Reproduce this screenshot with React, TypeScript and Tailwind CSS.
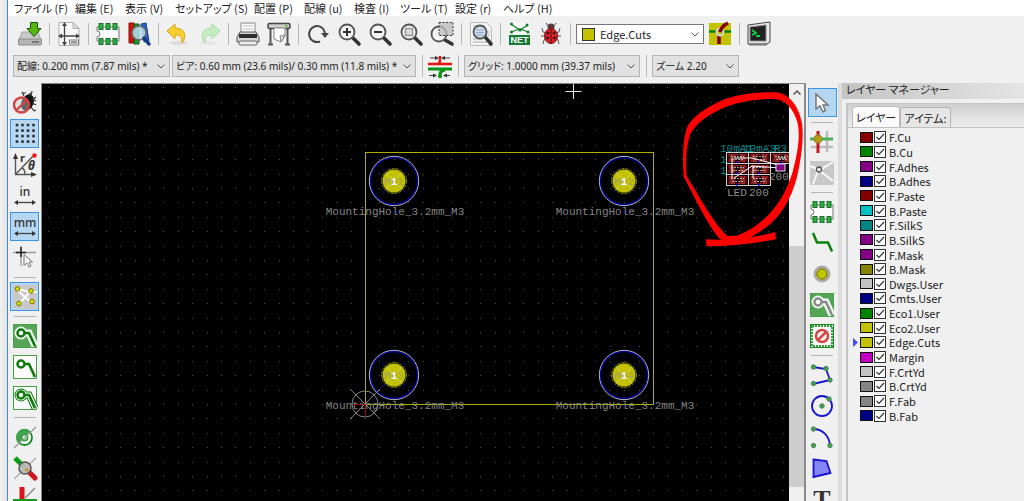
import clsx from "clsx";
import type { ReactNode } from "react";

const MENUS = [
  { label: "ファイル (F)", width: "w-[61px]" },
  { label: "編集 (E)", width: "w-[50px]" },
  { label: "表示 (V)", width: "w-[50px]" },
  { label: "セットアップ (S)", width: "w-[79px]" },
  { label: "配置 (P)", width: "w-[50px]" },
  { label: "配線 (u)", width: "w-[50px]" },
  { label: "検査 (I)", width: "w-[46px]" },
  { label: "ツール (T)", width: "w-[55px]" },
  { label: "設定 (r)", width: "w-[48px]" },
  { label: "ヘルプ (H)", width: "w-[60px]" },
];

const LAYERS = [
  { name: "F.Cu", color: "bg-[#840000]" },
  { name: "B.Cu", color: "bg-[#008400]" },
  { name: "F.Adhes", color: "bg-[#840084]" },
  { name: "B.Adhes", color: "bg-[#000084]" },
  { name: "F.Paste", color: "bg-[#840000]" },
  { name: "B.Paste", color: "bg-[#00c2c2]" },
  { name: "F.SilkS", color: "bg-[#008484]" },
  { name: "B.SilkS", color: "bg-[#840084]" },
  { name: "F.Mask", color: "bg-[#840084]" },
  { name: "B.Mask", color: "bg-[#848400]" },
  { name: "Dwgs.User", color: "bg-[#c2c2c2]" },
  { name: "Cmts.User", color: "bg-[#000084]" },
  { name: "Eco1.User", color: "bg-[#008400]" },
  { name: "Eco2.User", color: "bg-[#c2c200]" },
  { name: "Edge.Cuts", color: "bg-[#c2c200]" },
  { name: "Margin", color: "bg-[#c200c2]" },
  { name: "F.CrtYd", color: "bg-[#c2c2c2]" },
  { name: "B.CrtYd", color: "bg-[#848484]" },
  { name: "F.Fab", color: "bg-[#848484]" },
  { name: "B.Fab", color: "bg-[#000084]" },
];

const ACTIVE_LAYER = "Edge.Cuts";

function Icon(props: { children: ReactNode }) {
  return (
    <svg viewBox="0 0 24 24" className="size-6 shrink-0 overflow-visible" fill="none" aria-hidden>
      {props.children}
    </svg>
  );
}

/* ---- top toolbar icons ---- */

function SaveIcon() {
  return (
    <Icon>
      <path d="M4 10h16l3 8H1z" fill="#c9c9c9" stroke="#a2a2a2" />
      <rect x="0.5" y="17" width="23" height="6" rx="1" fill="#b5b5b5" stroke="#8a8a8a" />
      <path d="M14 20h7" stroke="#666" strokeWidth="1.5" />
      <path d="M12.500 0.500h7v6h3.500l-7 8-7-8h3.500z" fill="#55b80a" stroke="#20520a" />
    </Icon>
  );
}

function PageIcon() {
  return (
    <Icon>
      <path d="M2 .5h14l6 6v17H2z" fill="#fafafa" stroke="#b0b0b0" />
      <path d="M16 .5v6h6z" fill="#ddd" stroke="#b0b0b0" />
      <path d="M7.500 2v20M2 14h19" stroke="#444" strokeWidth="1.300" />
      <path d="M7.500 0l2.500 4H5zM7.500 24l2.500-4H5zM1 14l4-2.500v5zM23 14l-4-2.500v5z" fill="#444" />
      <rect x="12.500" y="18" width="9" height="4" fill="#fff" stroke="#777" />
      <path d="M14 20h6" stroke="#333" />
    </Icon>
  );
}

function ChipIcon() {
  const xs = [3, 10, 17];
  return (
    <Icon>
      <path d="M1 5h22v14H1v-4a3 3 0 0 0 0-6z" fill="#fafafa" stroke="#777" />
      {xs.map((x) => (
        <g key={x} fill="#1db53a" stroke="#256b31">
          <rect x={x} y="1.500" width="4" height="6" />
          <rect x={x} y="16.500" width="4" height="6" />
        </g>
      ))}
    </Icon>
  );
}

function Lens(props: { cx?: number; cy?: number; r?: number; fill?: string }) {
  const { cx = 10, cy = 10, r = 7.5, fill = "#f4f4f4" } = props;
  const e = r * 0.8;
  return (
    <>
      <path d={`M${cx + e} ${cy + e}L22 22`} stroke="#333" strokeWidth="3.600" strokeLinecap="round" />
      <circle cx={cx} cy={cy} r={r} fill={fill} stroke="#555" strokeWidth="1.800" />
    </>
  );
}

function LibraryIcon() {
  return (
    <Icon>
      <path d="M2 1h5v20H2z" fill="#d8120a" stroke="#8d0b06" />
      <path d="M7 2h5v20H7z" fill="#179c28" stroke="#0a5c16" />
      <path d="M14 2l5-1 3 18-5 1z" fill="#2b62c8" stroke="#163c86" />
      <circle cx="12" cy="11" r="7" fill="#b9dceb" fillOpacity=".85" stroke="#666" strokeWidth="1.500" />
      <path d="M17 16l5 6" stroke="#173a7c" strokeWidth="3.500" strokeLinecap="round" />
    </Icon>
  );
}

function UndoIcon() {
  return (
    <Icon>
      <ellipse cx="13" cy="21" rx="9" ry="2" fill="#ddd" />
      <path
        d="M1 9l8-7v4c9 0 13 7 7 15 0-6-1-8-7-8v4z"
        fill="#f5cf2f"
        stroke="#d9a514"
        strokeLinejoin="round"
      />
    </Icon>
  );
}

function RedoIcon() {
  return (
    <Icon>
      <ellipse cx="11" cy="21" rx="9" ry="2" fill="#e6e6e6" />
      <path
        d="M23 9l-8-7v4C6 6 2 13 8 21c0-6 1-8 7-8v4z"
        fill="#c5ecc0"
        stroke="#aadca6"
        strokeLinejoin="round"
      />
    </Icon>
  );
}

function PrintIcon() {
  return (
    <Icon>
      <path d="M5 1h14v10H5z" fill="#fdfdfd" stroke="#888" />
      <path d="M7 4h10M7 7h10" stroke="#bbb" />
      <path d="M4 10h16l3 5v5H1v-5z" fill="#d6d6d6" stroke="#555" />
      <rect x="3" y="12" width="18" height="4" fill="#2d2d2d" />
      <rect x="3" y="19" width="18" height="4" rx="1" fill="#eee" stroke="#666" />
    </Icon>
  );
}

function PlotIcon() {
  return (
    <Icon>
      <rect x="1" y="1.500" width="22" height="5" rx="1.500" fill="#cfcfcf" stroke="#444" strokeWidth="1.500" />
      <path d="M18 4h3" stroke="#63b82c" strokeWidth="1.500" />
      <path d="M3.500 7v15M20.500 7v15M1 22.500h5M18 22.500h5" stroke="#555" strokeWidth="2" />
      <path d="M7 6h11v8l-4 6-7-3z" fill="#fff" stroke="#888" />
      <path d="M18 13l-5 1 1 6z" fill="#ddd" stroke="#888" />
    </Icon>
  );
}

function RefreshIcon() {
  return (
    <Icon>
      <path d="M14 19.500A8 8 0 1 1 19 11" stroke="#444" strokeWidth="2" />
      <path d="M15 11h8l-4 5z" fill="#444" />
    </Icon>
  );
}

function ZoomInIcon() {
  return (
    <Icon>
      <Lens />
      <path d="M6 10h8M10 6v8" stroke="#333" strokeWidth="2" />
    </Icon>
  );
}

function ZoomOutIcon() {
  return (
    <Icon>
      <Lens />
      <path d="M6 10h8" stroke="#333" strokeWidth="2" />
    </Icon>
  );
}

function ZoomFitIcon() {
  return (
    <Icon>
      <Lens />
      <rect x="6.500" y="6.500" width="7" height="7" fill="#ddd" stroke="#999" strokeWidth="1.500" />
    </Icon>
  );
}

function ZoomAreaIcon() {
  return (
    <Icon>
      <Lens cy={12} cx={9} />
      <rect x="9" y=".5" width="14" height="13" fill="#bbb" fillOpacity=".75" stroke="#333" strokeDasharray="2 1.500" />
    </Icon>
  );
}

function FindIcon() {
  return (
    <Icon>
      <path d="M1.500.5h16l5 5v18h-21z" fill="#f5f5f5" stroke="#bbb" />
      <path d="M4 4h12M4 7h4M4 17h10M4 20h14M18 10h3M18 13h3" stroke="#aaa" />
      <Lens cx={11} cy={10} r={6.5} fill="#cfdcec" />
      <path d="M7 8h8M7 10.500h8M7 13h7" stroke="#8ea6c9" />
    </Icon>
  );
}

function NetIcon() {
  return (
    <Icon>
      <rect x="2" y="0" width="20" height="12" fill="#f6f6f6" />
      <path d="M3 2l9 6 8-5M3 10l9-3 8 3" stroke="#1c8a2b" strokeWidth="1.200" />
      <g fill="#12792b">
        <circle cx="3.500" cy="2" r="1.500" />
        <circle cx="19" cy="3" r="1.500" />
        <circle cx="12" cy="8" r="1.600" />
        <circle cx="3.500" cy="10" r="1.500" />
        <circle cx="20" cy="10" r="1.500" />
      </g>
      <rect x="1" y="13" width="21" height="10" fill="#147a35" />
      <text x="11.500" y="21" textAnchor="middle" fill="#fff" className="font-['Liberation_Sans'] text-[9px] font-bold">
        NET
      </text>
    </Icon>
  );
}

function LadybugIcon() {
  return (
    <Icon>
      <path
        d="M7 1l3 4M17 1l-3 4M3 6l1 4 4 1M21 6l-1 4-4 1M2 14h5M22 14h-5M4 22l1-4 3-2M20 22l-1-4-3-2"
        stroke="#555"
      />
      <circle cx="12" cy="5" r="3.500" fill="#5c3a3a" />
      <ellipse cx="12" cy="14" rx="6.500" ry="7.500" fill="#d8222b" stroke="#7d1117" />
      <path d="M12 7v15" stroke="#5c0b10" />
      <g fill="#3a090c">
        <circle cx="9" cy="11" r="1.300" />
        <circle cx="15" cy="11" r="1.300" />
        <circle cx="8.500" cy="16" r="1.300" />
        <circle cx="15.500" cy="16" r="1.300" />
      </g>
    </Icon>
  );
}

function LayerPairIcon() {
  return (
    <Icon>
      <rect x="1" y="1" width="22" height="22" fill="#c2c200" />
      <path d="M1 9.500h22" stroke="#008400" strokeWidth="2.500" />
      <path d="M11 22V11" stroke="#840000" strokeWidth="3.600" />
      <circle cx="12" cy="10" r="3.500" fill="#c2c200" stroke="#d8d8d8" strokeWidth="2" />
      <path d="M12 10c1-4 4-7 8-9" stroke="#840000" strokeWidth="3.600" />
    </Icon>
  );
}

function ConsoleIcon() {
  return (
    <Icon>
      <path d="M1 3l22-3v20l-3 2H1z" fill="#e8e8e8" stroke="#444" />
      <path d="M2 22.500h18" stroke="#777" strokeWidth="2" />
      <path d="M3 5l16-2v16H3z" fill="#222" stroke="#888" />
      <path d="M5 8l4 3-4 2M9 14h4" stroke="#13d447" strokeWidth="1.800" />
    </Icon>
  );
}

function AutoTrackIcon() {
  return (
    <Icon>
      <path d="M0 9h24" stroke="#e11" strokeWidth="2.500" />
      <path d="M9 9c3 0 3-2 3-8" stroke="#e11" strokeWidth="2.500" />
      <path d="M0 14h24" stroke="#0a9413" strokeWidth="3" />
      <path d="M12 23v-3c0-3 2-5 5-5" stroke="#0a9413" strokeWidth="3.500" />
      <path d="M2 3h7M22 3h-7M1 20.500h7M22 20.500h-6" stroke="#444" />
      <path d="M11 3L7 1v4zM13 3l4-2v4zM9 20.500l-4-2v4zM15 20.500l4-2v4z" fill="#333" />
    </Icon>
  );
}

/* ---- left toolbar icons ---- */

function DrcOffIcon() {
  return (
    <Icon>
      <ellipse cx="14.500" cy="11.500" rx="6" ry="8.500" transform="rotate(25 14.500 11.500)" fill="#111" />
      <path
        d="M9 1l2 4M19 0l-1 5M10 2h3M19 2l-3 1M23 6l-4 3M19 12l4 2M18 16l3 4M21 20l2-1M20 8l3 2"
        stroke="#333"
        strokeWidth="1.200"
      />
      <circle cx="8.500" cy="14" r="7.500" fill="#ccc" fillOpacity=".45" stroke="#cf4444" strokeWidth="2.400" />
      <path d="M3.500 19L14 9" stroke="#cf4444" strokeWidth="2.400" />
    </Icon>
  );
}

function GridIcon() {
  const steps = [4, 9.5, 15, 20.5];
  return (
    <Icon>
      {steps.map((y) => steps.map((x) => <circle key={`${x}-${y}`} cx={x} cy={y - 1} r="1.500" fill="#333" />))}
    </Icon>
  );
}

function PolarIcon() {
  return (
    <Icon>
      <path d="M2.500 3v18.500H20M3 21L20 3M9 15c2 1 3 3 3 6" stroke="#555" strokeWidth="1.400" />
      <path d="M2.500 0l2.500 6H0zM24 21.500L18 19v5z" fill="#333" />
      <circle cx="21.500" cy="2.500" r="2.200" fill="#f11" />
      <text x="7" y="9" fill="#333" className="font-['Noto_Sans'] text-[11px] font-bold">
        r
      </text>
      <text x="15" y="17" fill="#333" className="font-['Noto_Sans'] text-[12px] font-bold italic">
        θ
      </text>
    </Icon>
  );
}

function UnitIcon(props: { unit: string }) {
  return (
    <Icon>
      <text x="12" y="12" textAnchor="middle" fill="#333" className="font-['Noto_Sans'] text-[12px] font-medium">
        {props.unit}
      </text>
      <path d="M3 18.500h18" stroke="#444" strokeWidth="1.300" />
      <path d="M1 18.500l4-2.500v5zM23 18.500l-4-2.500v5z" fill="#333" />
    </Icon>
  );
}

function CursorShapeIcon() {
  return (
    <Icon>
      <path d="M8 0v20M0 6.500h23" stroke="#999" strokeWidth="1.300" />
      <path d="M8 1v10M3 6.500h10" stroke="#222" strokeWidth="1.500" />
      <path d="M11 8.500v11l3-2.500 2 4 2-1-2-4h3.500z" fill="#f6f6f6" stroke="#777" />
    </Icon>
  );
}

function RatsnestIcon() {
  return (
    <Icon>
      <rect width="24" height="24" fill="#c8c8c8" />
      <path d="M4 5l15 13M18 6L5 20M18 7h6M4 4l14 3" stroke="#fff" strokeWidth="2" />
      <g fill="#dede00" stroke="#777700">
        <circle cx="4.500" cy="4" r="2.300" />
        <circle cx="18" cy="6" r="2.300" />
        <circle cx="6" cy="18.500" r="2.300" />
        <circle cx="19" cy="16.500" r="2.300" />
      </g>
    </Icon>
  );
}

function ZoneIcon(props: { filled?: boolean; outlined?: boolean; color?: string }) {
  const { filled, outlined, color = "#0a7a0a" } = props;
  const track = "M11 9h5l6 13";
  return (
    <Icon>
      <rect x=".5" y=".5" width="23" height="23" fill={filled ? "#56a456" : "#fbfbfb"} stroke="#46a046" />
      {outlined && (
        <>
          <circle cx="8" cy="9" r="6.500" fill={filled ? "#f2f8f2" : color} />
          <path d={track} stroke={filled ? "#f2f8f2" : color} strokeWidth="7" />
          <circle cx="8" cy="9" r="5.500" fill="#f2f8f2" />
          <path d={track} stroke="#f2f8f2" strokeWidth="5" />
        </>
      )}
      <path d={track} stroke={color} strokeWidth="2.600" />
      <circle cx="8" cy="9" r="3.500" fill="#fff" stroke={color} strokeWidth="2.500" />
    </Icon>
  );
}

function ViaSketchIcon() {
  return (
    <Icon>
      <circle cx="11.500" cy="12.500" r="7.500" fill="#fff" stroke="#0c8c20" strokeWidth="1.800" />
      <path d="M5.500 18A8 8 0 0 1 17 6.500z" fill="#3ea44b" />
      <circle cx="11.500" cy="12.500" r="3" fill="#fff" stroke="#3ea44b" strokeWidth="2" />
      <path d="M1 23L23 2" stroke="#999" strokeWidth="1.200" />
    </Icon>
  );
}

function TrackSketchIcon() {
  return (
    <Icon>
      <path d="M2 2l9 9" stroke="#0c9c1c" strokeWidth="5" />
      <path d="M13 13l9 9" stroke="#d8141c" strokeWidth="5" strokeLinecap="round" />
      <path d="M1 23L23 2" stroke="#aaa" strokeWidth="1.300" />
      <circle cx="12" cy="12" r="6" fill="#bbb" fillOpacity=".9" stroke="#555" strokeWidth="1.500" />
      <path d="M11 14l4-2v3z" fill="#c2a200" />
    </Icon>
  );
}

function ContrastIcon() {
  return (
    <Icon>
      <path d="M9 0v24" stroke="#d8141c" strokeWidth="5" />
      <path d="M0 13h24" stroke="#159a1c" strokeWidth="2" />
      <path d="M12 11L22 1" stroke="#888" strokeWidth="1.500" />
    </Icon>
  );
}

/* ---- right toolbar icons ---- */

function ArrowIcon() {
  return (
    <Icon>
      <path d="M6 3v15l4-3 3 6 2.500-1.500L13 14h5z" fill="#fff" stroke="#777" strokeWidth="1.500" />
    </Icon>
  );
}

function HighlightNetIcon() {
  return (
    <Icon>
      <path d="M17 1v21M1 17h22" stroke="#bbb" strokeWidth="2.500" />
      <path d="M8 1v22" stroke="#c9151d" strokeWidth="3" />
      <path d="M0 9h23" stroke="#4cae55" strokeWidth="3" />
      <circle cx="8" cy="9" r="4" fill="#b79b1b" stroke="#94801c" />
    </Icon>
  );
}

function LocalRatsnestIcon() {
  return (
    <Icon>
      <rect width="24" height="24" rx="1" fill="#c8c8c8" />
      <path d="M8 8L0 5M10 9l13-8M8 10L3 23M10 10l13 10" stroke="#fafafa" strokeWidth="2" />
      <circle cx="9" cy="8.500" r="2.500" fill="#eee" stroke="#555" strokeWidth="1.300" />
    </Icon>
  );
}

function RouteIcon() {
  return (
    <Icon>
      <path d="M3 2l4 9.500h11l4 9" stroke="#07830c" strokeWidth="2.500" />
    </Icon>
  );
}

function ViaIcon() {
  return (
    <Icon>
      <circle cx="12" cy="12" r="7" fill="#c2c200" stroke="#a9a9a9" strokeWidth="3" />
      <circle cx="12" cy="12" r="5" stroke="#777700" />
    </Icon>
  );
}

function KeepoutIcon() {
  return (
    <Icon>
      <rect x="2" y="2" width="20" height="20" stroke="#3e9b45" strokeWidth="3" strokeDasharray="2 1" />
      <rect x=".5" y=".5" width="23" height="23" stroke="#188a22" />
      <rect x="3" y="3" width="18" height="18" fill="#fafafa" />
      <circle cx="12" cy="12" r="6" stroke="#d64545" strokeWidth="2.500" />
      <path d="M8 16l8-8" stroke="#d64545" strokeWidth="2.500" />
    </Icon>
  );
}

function Nodes(props: { points: [number, number][] }) {
  return props.points.map(([x, y]) => (
    <circle key={`${x}-${y}`} cx={x} cy={y} r="2.200" fill="#2fae3f" stroke="#5b7a5f" />
  ));
}

function LineIcon() {
  return (
    <Icon>
      <path d="M3 4l13 2 4 11-17 4" stroke="#1414cc" strokeWidth="1.800" />
      <Nodes points={[[3.5, 4], [16, 5.5], [20, 17], [3.5, 20.5]]} />
    </Icon>
  );
}

function CircleIcon() {
  return (
    <Icon>
      <circle cx="12" cy="12" r="10" stroke="#1414cc" strokeWidth="1.800" />
      <Nodes points={[[12, 12], [19, 5]]} />
    </Icon>
  );
}

function ArcIcon() {
  return (
    <Icon>
      <path d="M3 4c10 0 16 7 17 16" stroke="#1414cc" strokeWidth="1.800" />
      <Nodes points={[[3.5, 4], [3.5, 20.5], [20, 20.5]]} />
    </Icon>
  );
}

function PolygonIcon() {
  return (
    <Icon>
      <path d="M3.500 3.500l13 1.500 4 12-17 4z" fill="#8484f4" stroke="#1414cc" strokeWidth="1.800" />
    </Icon>
  );
}

function TextIcon() {
  return (
    <Icon>
      <text x="12" y="21" textAnchor="middle" fill="#333" className="font-['Liberation_Serif'] text-[26px] font-bold">
        T
      </text>
    </Icon>
  );
}

/* ---- toolbar pieces ---- */

function Tool(props: { label: string; selected?: boolean; children: ReactNode }) {
  return (
    <button
      type="button"
      aria-label={props.label}
      aria-pressed={props.selected}
      className={clsx(
        "flex size-[29px] shrink-0 items-center justify-center border",
        props.selected ? "border-[#3c95e4] bg-[#b5d7f3]" : "border-transparent",
      )}
    >
      {props.children}
    </button>
  );
}

function TopTool(props: { label: string; children: ReactNode }) {
  return (
    <button type="button" aria-label={props.label} className="flex h-7 w-[31px] shrink-0 items-center justify-center">
      {props.children}
    </button>
  );
}

function VLine() {
  return (
    <div className="flex h-[22px] w-2 shrink-0 justify-center">
      <div className="w-px bg-[#b8b8b8]" />
    </div>
  );
}

function HLine() {
  return (
    <div className="flex h-1.5 w-[22px] shrink-0 items-center">
      <div className="h-px w-full bg-[#b4b4b4]" />
    </div>
  );
}

function Chevron() {
  return (
    <svg
      viewBox="0 0 8 5"
      className="pointer-events-none col-start-1 row-start-1 mr-1 h-[5px] w-2 self-center justify-self-end"
      fill="none"
      aria-hidden
    >
      <path d="M.5.5L4 4 7.500.5" stroke="#555" />
    </svg>
  );
}

function Combo(props: { label: string; value: string; width: string }) {
  return (
    <div className={clsx("grid h-[22px] shrink-0 border border-[#b4b4b4] bg-[#e1e1e1]", props.width)}>
      <select
        aria-label={props.label}
        className="col-start-1 row-start-1 w-full appearance-none bg-transparent pr-3 pl-[3px] font-['Noto_Sans','Noto_Sans_CJK_JP',sans-serif] text-[10px] leading-5"
      >
        <option>{props.value}</option>
      </select>
      <Chevron />
    </div>
  );
}

/* ---- board canvas ---- */

const PITCH = 14.4;
const ORIGIN = { x: 323, y: 320 };
const HOLES = [
  { x: 352, y: 97, ref: "MH1" },
  { x: 582, y: 97, ref: "MH2" },
  { x: 352, y: 291, ref: "MH3" },
  { x: 582, y: 291, ref: "MH4" },
];
const PARTS = [
  { x: 686, y: 71 },
  { x: 708, y: 71 },
  { x: 730, y: 71 },
  { x: 686, y: 82 },
  { x: 708, y: 82 },
  { x: 686, y: 93 },
  { x: 708, y: 93 },
];

function gridPath() {
  let d = "";
  for (let row = -22; row < 40; row++) {
    for (let col = -22; col < 80; col++) {
      const x = Math.round(ORIGIN.x + col * PITCH);
      const y = Math.round(ORIGIN.y + row * PITCH);
      d += `M${x} ${y}h1v1h-1z`;
    }
  }
  return d;
}

function MountingHole(props: { x: number; y: number; name: string }) {
  return (
    <g transform={`translate(${props.x} ${props.y})`}>
      <circle r="23.500" fill="none" stroke="#000098" strokeWidth="1.500" />
      <circle r="24.700" fill="none" stroke="#b4b4b4" />
      <circle r="12.500" fill="none" stroke="#848400" strokeDasharray="3 1" />
      <circle r="11.500" fill="#c2c200" />
      <path d="M-8-8L8 8M8-8L-8 8" stroke="#d0d070" />
      <path d="M-12-12l3 3M12-12l-3 3M-12 12l3-3M12 12l-3-3M-2 31h6" stroke="#000098" />
      <text y="4" textAnchor="middle" fill="#a6a65a" className="text-[11px]">
        {props.name}
      </text>
      <text y="4" textAnchor="middle" fill="#fff" className="text-[10px] font-bold">
        1
      </text>
      <text x="1" y="34" textAnchor="middle" fill="#848484" className="text-[11px]">
        MountingHole_3.2mm_M3
      </text>
    </g>
  );
}

function Board() {
  return (
    <svg className="absolute inset-0 size-full font-['Liberation_Mono',monospace]">
      <path d={gridPath()} fill="#505050" />
      <rect x="323.500" y="68.500" width="288" height="252" fill="none" stroke="#b0b000" />
      {HOLES.map((hole) => (
        <MountingHole key={hole.ref} x={hole.x} y={hole.y} name={hole.ref} />
      ))}
      <g fill="none" stroke="#848484">
        <circle cx="323" cy="320" r="13" />
        <path d="M308 305l30 30M338 305l-30 30" />
        <path d="M311 320.500h12.500v12" stroke="#a00000" />
      </g>
      <path d="M523.500 7.500h16M531.500 0v15" stroke="#e8e8e8" />

      <g className="text-[11px]" fill="#008c8c">
        <text x="678" y="68">10mA1</text>
        <text x="701" y="68">10mA3</text>
        <text x="732" y="68">R3</text>
        <text x="678" y="79">1</text>
        <text x="678" y="90">1</text>
      </g>
      {PARTS.map((part) => (
        <g key={`${part.x}-${part.y}`} transform={`translate(${part.x} ${part.y})`}>
          <rect x="-1.500" y="-2.500" width="22" height="11" fill="#180000" stroke="#d0d0d0" />
          <rect x="1" y="-.5" width="17" height="7" fill="none" stroke="#b82020" strokeDasharray="4 1" />
          <rect x="2" y="0" width="5" height="6" fill="#8c2a2a" />
          <rect x="12" y="0" width="5" height="6" fill="#8c2a2a" />
          <path d="M3 1.500h13M4 4.500h12" stroke="#b0a8a8" strokeDasharray="2 1" />
          <circle cx="9" cy="7.500" r="1.200" fill="#0000c0" />
        </g>
      ))}
      <path d="M692 74h18l30 8M690 74v20M692 94l18-12 28 2M711 82v12M736 74h8" fill="none" stroke="#fff" />
      <rect x="734" y="80" width="9" height="7" fill="#840084" stroke="#ddd" />
      <g className="text-[11px]" fill="#8c8c8c">
        <text x="685" y="112">LED</text>
        <text x="707" y="112">200</text>
        <text x="727" y="96">200</text>
      </g>
    </svg>
  );
}

// Hand-drawn marker around the unplaced parts
function MarkerLoop() {
  return (
    <svg viewBox="0 0 420 540" className="pointer-events-none absolute -top-1 left-[628px] z-10 h-[180px] w-[140px]">
      <path
        fillRule="evenodd"
        fill="#f00"
        d="M150 478C108 428 80 362 41 290C37 235 38 185 50 145C62 115 105 82 165 57C215 42 265 35 320 37C362 42 388 85 396 130C402 175 394 235 380 295C364 352 340 395 308 425C278 453 240 475 205 492ZM172 468C126 424 96 362 50 288C47 235 48 202 61 162C80 127 120 100 175 78C225 62 270 55 318 58C350 62 372 90 383 130C391 170 383 220 368 275C348 340 318 385 283 416C255 442 225 458 200 467Z"
      />
      <path d="M108 478C170 482 250 475 316 456L318 478C260 490 180 499 109 499Z" fill="#f00" />
    </svg>
  );
}

function LayerRow(props: { name: string; color: string }) {
  return (
    <li className="flex items-center">
      <span className="flex w-[7px] shrink-0">
        {props.name === ACTIVE_LAYER && (
          <svg viewBox="0 0 5 9" className="h-[9px] w-[5px]" aria-hidden>
            <path d="M0 0l5 4.500L0 9z" fill="#4a4aff" />
          </svg>
        )}
      </span>
      <span className={clsx("h-[11px] w-[13px] border border-[#111]", props.color)} />
      <label className="flex items-center gap-[3px] pl-px">
        <span className="grid">
          <input
            type="checkbox"
            defaultChecked
            className="peer col-start-1 row-start-1 size-3 appearance-none border border-[#333] bg-white"
          />
          <svg
            viewBox="0 0 12 12"
            className="pointer-events-none invisible col-start-1 row-start-1 size-3 peer-checked:visible"
            fill="none"
            aria-hidden
          >
            <path d="M2.500 6L5 8.500l5-5.500" stroke="#333" strokeWidth="1.200" />
          </svg>
        </span>
        <span className="leading-[14px]">{props.name}</span>
      </label>
    </li>
  );
}

function LayerManager() {
  return (
    <aside className="flex min-w-0 flex-1 flex-col border-l-4 border-[#dcdcdc]">
      <h2 className="h-4 bg-linear-to-r from-[#c4c4c4] to-[#e4e4e4] pl-1 leading-3">
        レイヤー マネージャー
      </h2>
      <div className="mt-1 ml-1 flex-1 border-t border-l-2 border-[#c4c4c4]">
        <div role="tablist" className="flex h-6 items-end border-b border-[#c0c0c0] bg-linear-to-b from-[#d0d0d0] to-[#ececec] pl-1">
          <button
            type="button"
            role="tab"
            aria-selected="true"
            className="h-[21px] w-12 rounded-t-sm border border-b-0 border-[#bbb] bg-[#fafafa] leading-5"
          >
            レイヤー
          </button>
          <button
            type="button"
            role="tab"
            aria-selected="false"
            className="h-5 w-[51px] rounded-t-sm border border-b-0 border-[#b4b4b4] bg-[#e6e6e6] leading-[18px]"
          >
            アイテム:
          </button>
        </div>
        <ul className="mt-0.5 grid h-[293px] auto-rows-fr pl-[5px]">
          {LAYERS.map((layer) => (
            <LayerRow key={layer.name} name={layer.name} color={layer.color} />
          ))}
        </ul>
      </div>
    </aside>
  );
}

export default function App() {
  return (
    <div className="flex h-screen overflow-hidden bg-[#f0f0f0] font-['Noto_Sans_CJK_JP',sans-serif] text-[11px] text-[#222] [font-feature-settings:'palt']">
      <div className="w-2 shrink-0 border-r border-[#3f8fd0] bg-linear-to-r from-[#f2f2f2] to-[#e2e2e2]" />
      <div className="flex min-w-0 flex-1 flex-col">
        <nav className="flex h-4 shrink-0 bg-white pl-1.5">
          {MENUS.map((menu) => (
            <button
              key={menu.label}
              type="button"
              className={clsx("shrink-0 text-left leading-4 whitespace-nowrap", menu.width)}
            >
              {menu.label}
            </button>
          ))}
        </nav>

        <div className="flex h-9 shrink-0 items-center pl-1.5">
          <TopTool label="Save board"><SaveIcon /></TopTool>
          <VLine />
          <TopTool label="Page settings"><PageIcon /></TopTool>
          <VLine />
          <TopTool label="Footprint editor"><ChipIcon /></TopTool>
          <TopTool label="Footprint library"><LibraryIcon /></TopTool>
          <VLine />
          <TopTool label="Undo"><UndoIcon /></TopTool>
          <TopTool label="Redo"><RedoIcon /></TopTool>
          <VLine />
          <TopTool label="Print"><PrintIcon /></TopTool>
          <TopTool label="Plot"><PlotIcon /></TopTool>
          <VLine />
          <TopTool label="Redraw"><RefreshIcon /></TopTool>
          <TopTool label="Zoom in"><ZoomInIcon /></TopTool>
          <TopTool label="Zoom out"><ZoomOutIcon /></TopTool>
          <TopTool label="Zoom to fit"><ZoomFitIcon /></TopTool>
          <TopTool label="Zoom to selection"><ZoomAreaIcon /></TopTool>
          <VLine />
          <TopTool label="Find"><FindIcon /></TopTool>
          <VLine />
          <TopTool label="Read netlist"><NetIcon /></TopTool>
          <TopTool label="Design rules check"><LadybugIcon /></TopTool>
          <VLine />
          <div className="ml-0.5 grid h-5 w-32 shrink-0 border border-[#777] bg-white">
            <span className="col-start-1 row-start-1 ml-[5px] size-[13px] self-center border border-[#333] bg-[#c2c200]" />
            <select
              aria-label="Active layer"
              className="col-start-1 row-start-1 w-full appearance-none bg-transparent pl-[23px] leading-4"
            >
              <option>Edge.Cuts</option>
            </select>
            <Chevron />
          </div>
          <TopTool label="Layer pair"><LayerPairIcon /></TopTool>
          <VLine />
          <TopTool label="Scripting console"><ConsoleIcon /></TopTool>
        </div>

        <div className="flex h-[31px] shrink-0 items-start gap-0.5 pt-[3px] pl-[5px]">
          <Combo label="Track width" value="配線: 0.200 mm (7.87 mils) *" width="w-[157px]" />
          <Combo label="Via size" value="ビア: 0.60 mm (23.6 mils)/ 0.30 mm (11.8 mils) *" width="w-[244px]" />
          <VLine />
          <button type="button" aria-label="Auto track width" className="shrink-0">
            <AutoTrackIcon />
          </button>
          <VLine />
          <Combo label="Grid" value="グリッド: 1.0000 mm (39.37 mils)" width="w-[176px]" />
          <VLine />
          <Combo label="Zoom" value="ズーム 2.20" width="w-[87px]" />
        </div>

        <div className="flex min-h-0 flex-1">
          <div className="flex w-[33px] shrink-0 flex-col items-center gap-0.5 overflow-hidden pt-[5px]">
            <Tool label="DRC off"><DrcOffIcon /></Tool>
            <Tool label="Show grid" selected><GridIcon /></Tool>
            <Tool label="Polar coordinates"><PolarIcon /></Tool>
            <Tool label="Inches"><UnitIcon unit="in" /></Tool>
            <Tool label="Millimetres" selected><UnitIcon unit="mm" /></Tool>
            <Tool label="Cursor shape"><CursorShapeIcon /></Tool>
            <HLine />
            <Tool label="Show ratsnest" selected><RatsnestIcon /></Tool>
            <HLine />
            <Tool label="Filled zones"><ZoneIcon filled outlined /></Tool>
            <Tool label="Hide zones"><ZoneIcon /></Tool>
            <Tool label="Zone outlines"><ZoneIcon outlined /></Tool>
            <HLine />
            <Tool label="Sketch vias"><ViaSketchIcon /></Tool>
            <Tool label="Sketch tracks"><TrackSketchIcon /></Tool>
            <Tool label="High contrast"><ContrastIcon /></Tool>
          </div>

          <div className="flex w-[765px] shrink border-t border-r-2 border-l border-[#8a8a8a]">
            <main className="relative min-w-0 flex-1 bg-black">
              <Board />
              <MarkerLoop />
            </main>
            <div className="flex w-[15px] shrink-0 flex-col items-center bg-[#f0f0f0]">
              <svg viewBox="0 0 8 5" className="mt-1.5 h-[5px] w-2" fill="none" aria-hidden>
                <path d="M.5 4.500L4 1l3.500 3.500" stroke="#555" strokeWidth="1.500" />
              </svg>
              <div className="mt-[151px] mb-3.5 w-full flex-1 bg-[#cdcdcd]" />
            </div>
          </div>

          <div className="flex w-8 shrink-0 flex-col items-center gap-0.5 overflow-hidden pt-[5px]">
            <Tool label="Select" selected><ArrowIcon /></Tool>
            <HLine />
            <Tool label="Highlight net"><HighlightNetIcon /></Tool>
            <Tool label="Local ratsnest"><LocalRatsnestIcon /></Tool>
            <HLine />
            <Tool label="Add footprint"><ChipIcon /></Tool>
            <Tool label="Route tracks"><RouteIcon /></Tool>
            <Tool label="Add via"><ViaIcon /></Tool>
            <Tool label="Add zone"><ZoneIcon filled outlined color="#8c8c8c" /></Tool>
            <Tool label="Add keepout"><KeepoutIcon /></Tool>
            <HLine />
            <Tool label="Draw line"><LineIcon /></Tool>
            <Tool label="Draw circle"><CircleIcon /></Tool>
            <Tool label="Draw arc"><ArcIcon /></Tool>
            <Tool label="Draw polygon"><PolygonIcon /></Tool>
            <Tool label="Add text"><TextIcon /></Tool>
          </div>

          <LayerManager />
        </div>
      </div>
    </div>
  );
}
